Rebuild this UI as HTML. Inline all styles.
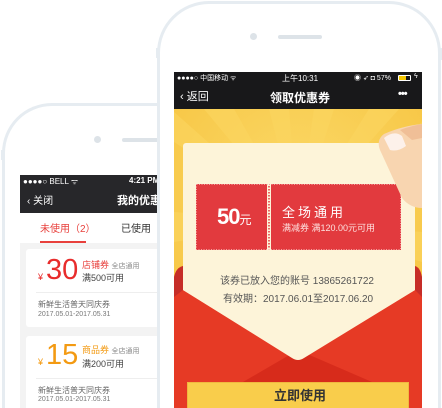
<!DOCTYPE html>
<html><head><meta charset="utf-8"><style>
*{margin:0;padding:0;box-sizing:border-box}
html,body{width:442px;height:408px;overflow:hidden}
body{background:#fff;position:relative;font-family:"Liberation Sans","Noto Sans CJK SC",sans-serif}
.abs{position:absolute}
.t{position:absolute;white-space:nowrap}
</style></head><body>
<div class="abs" style="left:2px;top:103px;width:300px;height:305px;border:3px solid #e6ecf1;border-bottom:none;border-radius:50px 50px 0 0;background:#fff"></div>
<div class="abs" style="left:1px;top:150px;width:3px;height:10px;background:#e6ecf1"></div>
<div class="abs" style="left:94px;top:136px;width:7px;height:7px;border-radius:50%;background:#dde3e8"></div>
<div class="abs" style="left:122px;top:138px;width:60px;height:4px;border-radius:2px;background:#dde3e8"></div>
<div class="abs" style="left:20px;top:175px;width:160px;height:233px;background:#f3f3f3"></div>
<div class="abs" style="left:20px;top:175px;width:160px;height:38px;background:#27272a"></div>
<div class="t" style="left:23px;top:176px;font-size:8px;color:#fff">●●●●○ BELL ᯤ</div>
<div class="t" style="left:129px;top:176px;font-size:8px;color:#fff;font-weight:bold">4:21 PM</div>
<div class="t" style="left:27px;top:192px;font-size:10px;color:#fff">‹ 关闭</div>
<div class="t" style="left:117px;top:192px;font-size:11px;color:#fff;font-weight:bold">我的优惠券</div>
<div class="abs" style="left:20px;top:213px;width:160px;height:30px;background:#fff"></div>
<div class="t" style="left:40px;top:220px;font-size:10px;color:#e8403c">未使用（2）</div>
<div class="abs" style="left:40px;top:241px;width:46px;height:2px;background:#e8403c"></div>
<div class="t" style="left:121px;top:220px;font-size:10px;color:#333">已使用（</div>
<div class="abs" style="left:26px;top:249px;width:140px;height:78px;background:#fff;border-radius:3px"></div>
<div class="abs" style="left:36px;top:292px;width:130px;height:1px;background:#eee"></div>
<div class="t" style="left:38px;top:272px;font-size:9px;color:#e82c2c">¥</div>
<div class="t" style="left:46px;top:254px;font-size:29px;color:#e82c2c">30</div>
<div class="t" style="left:82px;top:258px;font-size:9px;color:#e8403c">店铺券 <span style="color:#888;font-size:7px">全店通用</span></div>
<div class="t" style="left:82px;top:271px;font-size:9px;color:#444">满500可用</div>
<div class="t" style="left:38px;top:299px;font-size:8px;color:#666">新鲜生活普天同庆券</div>
<div class="t" style="left:38px;top:311px;font-size:7px;color:#777">2017.05.01-2017.05.31</div>
<div class="abs" style="left:26px;top:336px;width:140px;height:72px;background:#fff;border-radius:3px 3px 0 0"></div>
<div class="abs" style="left:36px;top:378px;width:130px;height:1px;background:#eee"></div>
<div class="t" style="left:38px;top:357px;font-size:9px;color:#f39a12">¥</div>
<div class="t" style="left:46px;top:339px;font-size:29px;color:#f39a12">15</div>
<div class="t" style="left:82px;top:343px;font-size:9px;color:#f39a12">商品券 <span style="color:#888;font-size:7px">全店通用</span></div>
<div class="t" style="left:82px;top:357px;font-size:9px;color:#444">满200可用</div>
<div class="t" style="left:38px;top:385px;font-size:8px;color:#666">新鲜生活普天同庆券</div>
<div class="t" style="left:38px;top:396px;font-size:7px;color:#777">2017.05.01-2017.05.31</div>

<div class="abs" style="left:157px;top:1px;width:284px;height:407px;border:3px solid #e6ecf1;border-bottom:none;border-radius:52px 52px 0 0;background:#fff"></div>
<div class="abs" style="left:156px;top:48px;width:3px;height:10px;background:#e6ecf1"></div>
<div class="abs" style="left:438px;top:48px;width:4px;height:12px;background:#e6ecf1"></div>
<div class="abs" style="left:250px;top:33px;width:7px;height:7px;border-radius:50%;background:#dde3e8"></div>
<div class="abs" style="left:278px;top:35px;width:44px;height:4px;border-radius:2px;background:#dde3e8"></div>
<div class="abs" style="left:174px;top:72px;width:248px;height:336px;background:#f7c544;overflow:hidden">
<svg width="248" height="336" style="position:absolute;left:0;top:0">
<defs><radialGradient id="g" cx="124" cy="120" r="200" gradientUnits="userSpaceOnUse"><stop offset="0" stop-color="#fbd968"/><stop offset="1" stop-color="#f6c23d"/></radialGradient></defs>
<rect width="248" height="336" fill="url(#g)"/>
<g fill="#fcd660" opacity=".6">
<polygon points="124,150 0,40 0,70"/><polygon points="124,150 30,37 60,37"/><polygon points="124,150 95,37 115,37"/><polygon points="124,150 140,37 160,37"/><polygon points="124,150 195,37 225,37"/><polygon points="124,150 248,50 248,80"/><polygon points="124,150 0,140 0,170"/><polygon points="124,150 248,160 248,190"/>
</g>
<rect x="9" y="71" width="232" height="230" rx="3" fill="#fdf4d9"/>
<path d="M0 210 Q0 196 9 194 L9 218 L124 289 L241 218 L241 194 Q248 196 248 210 L248 336 L0 336 Z" fill="#e63a25"/>
<path d="M0 205 Q2 196 9 194 L9 218 L0 225Z" fill="#c62d28"/>
<path d="M248 205 Q246 196 241 194 L241 218 L248 225Z" fill="#c62d28"/>
<path d="M69 310 L124 278 L198 310 Z" fill="#d72b1b"/>
<path d="M9 218 L118 286 Q124 290 130 286 L241 218 L241 200 L9 200Z" fill="#fdf4d9"/>
<rect x="22" y="112" width="71" height="66" fill="#e23a3e"/>
<rect x="97" y="112" width="130" height="66" fill="#e23a3e"/>
<line x1="95" y1="114" x2="95" y2="176" stroke="#e23a3e" stroke-width="1.5" stroke-dasharray="1.5 1.5"/>
<rect x="22.5" y="112.5" width="204" height="65" fill="none" stroke="#f4a0a0" stroke-width="1" stroke-dasharray="1 1.5"/>
<path d="M248 52 Q228 54 210 62 Q202 68 206 78 L228 126 Q236 136 248 136 Z" fill="#f8d5b0"/>
<path d="M248 52 Q236 54 226 58 L238 68 L248 66 Z" fill="#f0bf97"/>
<path d="M210 66 Q220 58 228 64 L232 74 Q224 80 216 78 Z" fill="#fdf1ea"/>
</svg>
<div class="t" style="left:43px;top:132px;font-size:22px;color:#fff;font-weight:bold;letter-spacing:-1px">50<span style="font-size:12px;font-weight:normal">元</span></div>
<div class="t" style="left:108px;top:130px;font-size:13px;color:#fff;letter-spacing:3px">全场通用</div>
<div class="t" style="left:108px;top:149px;font-size:9px;color:#fde0de">满减券 满120.00元可用</div>
<div class="t" style="left:46px;top:200px;font-size:10px;color:#555">该券已放入您的账号 13865261722</div>
<div class="t" style="left:49px;top:218px;font-size:10px;color:#555">有效期：2017.06.01至2017.06.20</div>
<div class="abs" style="left:13px;top:310px;width:222px;height:26px;background:#f9cd4b;border:1px solid #f0b840;border-bottom:none"></div>
<div class="t" style="left:100px;top:316px;font-size:13px;line-height:16px;color:#333;font-weight:bold">立即使用</div>
</div>
<div class="abs" style="left:174px;top:72px;width:248px;height:37px;background:#18181a"></div>
<div class="t" style="left:177px;top:73px;font-size:7px;color:#fff">●●●●○ 中国移动 ᯤ</div>
<div class="t" style="left:282px;top:73px;font-size:8px;color:#fff">上午10:31</div>
<div class="t" style="left:354px;top:73px;font-size:7px;color:#fff">◉ ➶ ◘ 57%</div>
<div class="abs" style="left:398px;top:75px;width:13px;height:6px;border:1px solid #fff;border-radius:1px"><div style="width:7px;height:4px;background:#f6c800"></div></div>
<div class="t" style="left:414px;top:73px;font-size:7px;color:#fff">ϟ</div>
<div class="t" style="left:180px;top:88px;font-size:11px;color:#fff">‹ 返回</div>
<div class="t" style="left:270px;top:89px;font-size:12px;color:#fff;font-weight:bold">领取优惠券</div>
<div class="t" style="left:398px;top:88px;font-size:11px;color:#fff;font-weight:bold;letter-spacing:-1px">•••</div>
</body></html>
